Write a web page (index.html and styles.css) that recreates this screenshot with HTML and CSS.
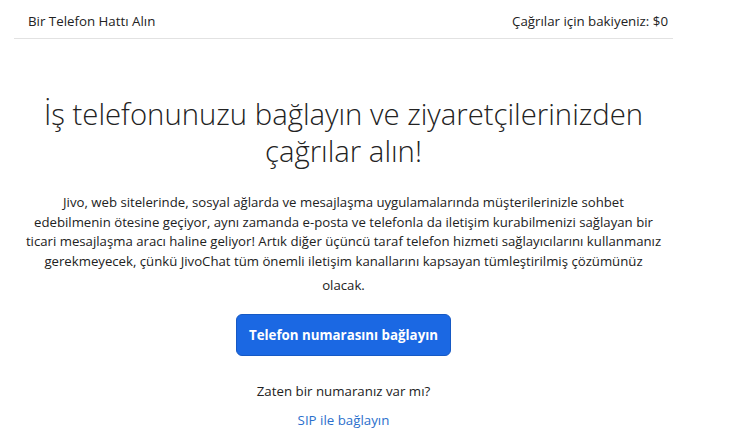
FILE: index.html
```html
<!DOCTYPE html>
<html lang="tr">
<head>
    <meta charset="UTF-8">
    <meta name="viewport" content="width=device-width, initial-scale=1.0">
    <title>Telefon Hattı</title>
    <link rel="stylesheet" href="styles.css">
</head>
<body>
    <div class="page">
        <!-- Top bar -->
        <div class="topbar">
            <span class="topbar-title">Bir Telefon Hattı Alın</span>
            <span class="topbar-balance">Çağrılar için bakiyeniz: $0</span>
        </div>

        <!-- Main content -->
        <div class="connect">
            <h1>İş telefonunuzu bağlayın ve ziyaretçilerinizden<br>çağrılar alın!</h1>
            <p class="intro">
                Jivo, web sitelerinde, sosyal ağlarda ve mesajlaşma uygulamalarında müşterilerinizle sohbet<br>
                edebilmenin ötesine geçiyor, aynı zamanda e-posta ve telefonla da iletişim kurabilmenizi sağlayan bir<br>
                ticari mesajlaşma aracı haline geliyor! Artık diğer üçüncü taraf telefon hizmeti sağlayıcılarını kullanmanız<br>
                gerekmeyecek, çünkü JivoChat tüm önemli iletişim kanallarını kapsayan tümleştirilmiş çözümünüz<br>
                <span class="last-line">olacak.</span>
            </p>
            <button class="connect-btn">Telefon numarasını bağlayın</button>
            <p class="have-number">Zaten bir numaranız var mı?</p>
            <a class="sip-link" href="#">SIP ile bağlayın</a>
        </div>
    </div>
</body>
</html>
```

FILE: styles.css
```css
body {
    margin: 0;
    font-family: "Open Sans", "Noto Sans", Arial, sans-serif;
    color: #222;
    background: #fff;
}
.page {
    width: 659px;
    margin-left: 14px;
}
.topbar {
    display: flex;
    justify-content: space-between;
    align-items: center;
    height: 39px;
    padding: 4px 5px 0 14px;
    box-sizing: border-box;
    border-bottom: 1px solid #e2e2e2;
    font-size: 13.3px;
    color: #222;
}
.connect {
    display: flex;
    flex-direction: column;
    align-items: center;
    text-align: center;
}
.connect h1 {
    margin: 57px 0 0 0;
    font-size: 29.3px;
    font-weight: 300;
    line-height: 37px;
    color: #222;
}
.intro {
    margin: 23px 0 0 0;
    font-size: 13.2px;
    line-height: 19.5px;
    color: #222;
}
.last-line {
    display: inline-block;
    margin-top: 5px;
}
.connect-btn {
    margin-top: 18px;
    width: 215px;
    height: 42px;
    border: 1px solid #1659c4;
    border-radius: 6px;
    background-color: #1b68e3;
    color: #fff;
    font-family: inherit;
    font-size: 13.3px;
    font-weight: 700;
    cursor: pointer;
}
.have-number {
    margin: 25px 0 0 0;
    font-size: 13.3px;
    line-height: 20px;
}
.sip-link {
    margin-top: 9px;
    font-size: 13.3px;
    line-height: 20px;
    color: #2b6fcc;
    text-decoration: none;
}
```
